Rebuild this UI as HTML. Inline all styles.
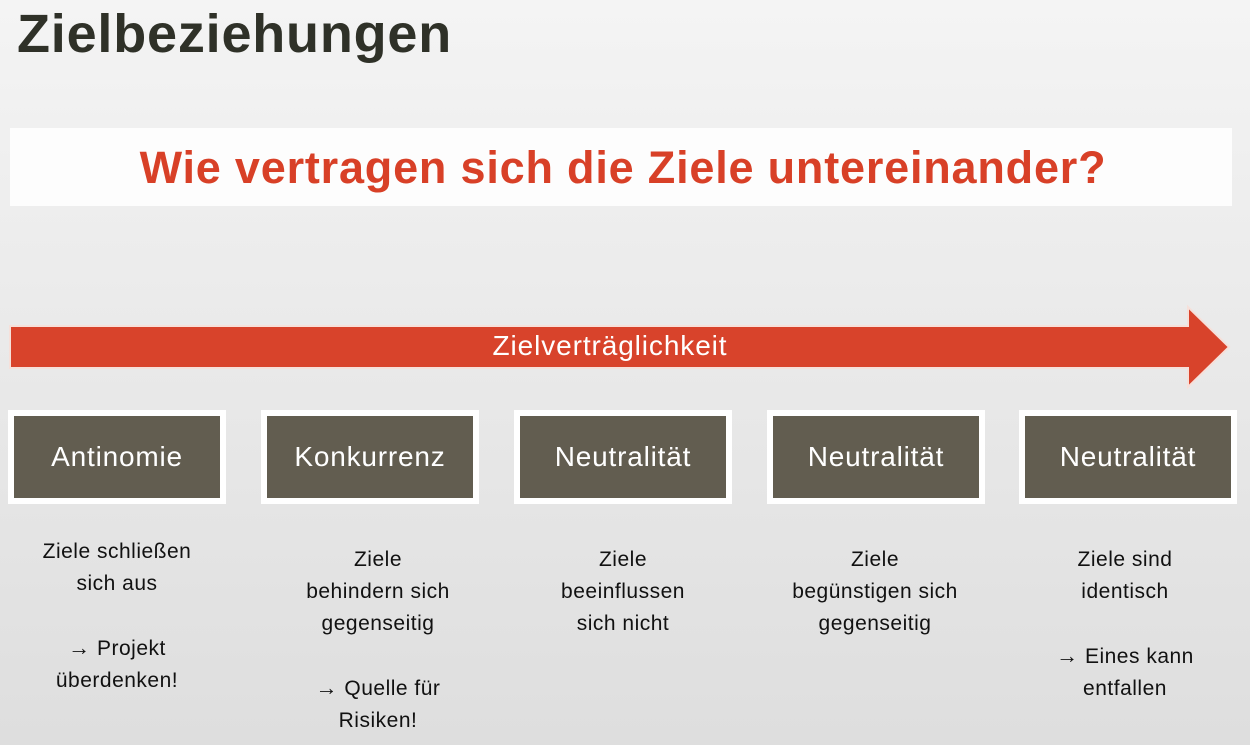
<!DOCTYPE html>
<html><head><meta charset="utf-8"><style>
*{margin:0;padding:0;box-sizing:border-box}
body{width:1250px;height:745px;overflow:hidden;position:relative;font-family:"Liberation Sans",sans-serif;background:linear-gradient(#f4f4f4 0%,#ebebeb 40%,#dedede 100%)}
.t{position:absolute;left:17px;top:3px;font-size:54px;font-weight:bold;color:#2f3128;letter-spacing:0.8px}
.ban{position:absolute;left:10px;top:128px;width:1222px;height:78px;background:#fdfdfd}
.ban div{position:absolute;left:0;width:1222px;top:14px;text-align:center;font-size:45px;font-weight:bold;color:#d84027;letter-spacing:0.8px;padding-left:4px}
svg{position:absolute;left:0;top:0}
.al{position:absolute;left:0;width:1220px;top:330px;text-align:center;color:#fff;font-size:28px;letter-spacing:0.9px}
.b{position:absolute;top:410px;width:218px;height:94px;background:#fff}
.b div{position:absolute;left:6px;top:6px;right:6px;bottom:6px;background:#625d50;color:#fff;font-size:28px;letter-spacing:0.8px;display:flex;align-items:center;justify-content:center}
.c{position:absolute;width:240px;text-align:center;font-size:21px;letter-spacing:0.5px;line-height:32px;color:#111}
.a{font-weight:bold;font-size:22px}
</style></head><body>
<div class="t">Zielbeziehungen</div>
<div class="ban"><div>Wie vertragen sich die Ziele untereinander?</div></div>
<svg width="1250" height="745"><polygon points="10,326 1188,326 1188,307 1229,347 1188,387 1188,368 10,368" fill="#d8432b" stroke="#f6e0da" stroke-width="2"/></svg>
<div class="al">Zielverträglichkeit</div>
<div class="b" style="left:8px"><div>Antinomie</div></div>
<div class="b" style="left:261px"><div>Konkurrenz</div></div>
<div class="b" style="left:514px"><div>Neutralität</div></div>
<div class="b" style="left:767px"><div>Neutralität</div></div>
<div class="b" style="left:1019px"><div>Neutralität</div></div>
<div class="c" style="left:-3px;top:536px">Ziele schließen<br>sich aus<br><br><span class="a">→</span> Projekt<br>überdenken!</div>
<div class="c" style="left:258px;top:544px">Ziele<br>behindern sich<br>gegenseitig<br><br><span class="a">→</span> Quelle für<br>Risiken!</div>
<div class="c" style="left:503px;top:544px">Ziele<br>beeinflussen<br>sich nicht</div>
<div class="c" style="left:755px;top:544px">Ziele<br>begünstigen sich<br>gegenseitig</div>
<div class="c" style="left:1005px;top:544px">Ziele sind<br>identisch<br><br><span class="a">→</span> Eines kann<br>entfallen</div>
</body></html>
